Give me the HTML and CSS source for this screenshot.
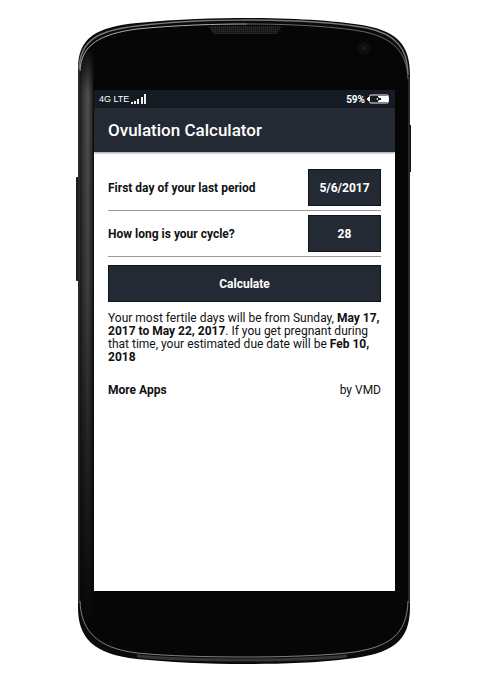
FILE: index.html
```html
<!DOCTYPE html>
<html lang="en">
<head>
  <meta charset="UTF-8">
  <meta name="viewport" content="width=device-width, initial-scale=1.0">
  <title>Ovulation Calculator</title>
  <link rel="stylesheet" href="styles.css">
</head>
<body>

  <div class="phone">
    <!-- Phone body -->
    <svg class="phone-case" viewBox="0 0 333 648" preserveAspectRatio="none" aria-hidden="true">
      <defs>
        <linearGradient id="side" x1="0" x2="1" y1="0" y2="0">
          <stop offset="0" stop-color="#161616"/>
          <stop offset="0.25" stop-color="#343434"/>
          <stop offset="0.6" stop-color="#505050"/>
          <stop offset="0.85" stop-color="#2c2c2c"/>
          <stop offset="1" stop-color="#080808"/>
        </linearGradient>
        <linearGradient id="shade" x1="0" x2="0" y1="0" y2="1">
          <stop offset="0" stop-color="#060606"/>
          <stop offset="0.08" stop-color="#060606" stop-opacity="0"/>
          <stop offset="0.4" stop-color="#060606" stop-opacity="0.2"/>
          <stop offset="0.7" stop-color="#060606" stop-opacity="0.6"/>
          <stop offset="1" stop-color="#060606"/>
        </linearGradient>
        <pattern id="mesh" width="2" height="2" patternUnits="userSpaceOnUse">
          <rect width="2" height="2" fill="#181818"/>
          <rect width="1" height="1" fill="#303030"/>
        </pattern>
        <clipPath id="glass">
          <path d="M3 54C4 24 24 17 60 12C100 8 140 7 170 7V640C130 640 90 639 60 636C20 631 4 614 3 584Z"/>
        </clipPath>
      </defs>
      <rect x="-1" y="160" width="3" height="104" rx="1" fill="#1a1a1a"/>
      <rect x="332" y="108" width="2" height="47" fill="#111"/>
      <path d="M1 52C1 20 20 10 60 6C100 2 140 1 170 1C220 1 262 4 290 9C320 15 333 28 333 58V590C333 625 315 637 270 642C240 646 200 647 170 647C130 647 90 645 60 642C15 637 1 620 1 590Z" fill="#0a0a0a"/>
      <path d="M2 52C3 23 22 13 60 9C100 4 140 3 170 3C220 3 262 6 290 11C318 17 331 31 331 58" fill="none" stroke="#777" stroke-width="1.5"/>
      <path d="M3 54C4 24 24 17 60 12C100 8 140 7 170 7C220 7 262 10 288 15C315 21 330 34 331 62V584C330 618 312 631 270 636C240 639 200 640 170 640C130 640 90 639 60 636C20 631 4 614 3 584Z" fill="#060606"/>
      <g clip-path="url(#glass)">
        <path d="M2 30H17V610H2Z" fill="url(#side)"/>
        <path d="M2 30H17V610H2Z" fill="url(#shade)"/>
      </g>
      <path d="M3 54C4 27 24 17 60 12C100 8 140 7 170 7" fill="none" stroke="#c0c0c0" stroke-width="0.9"/>
      <path d="M170 7C220 7 262 10 288 15C315 21 330 34 331 62" fill="none" stroke="#808080" stroke-width="0.8"/>
      <path d="M2 52V586M332 60V586" fill="none" stroke="#555" stroke-width="0.8"/>
      <path d="M3 584C4 614 20 631 60 636C90 639 130 640 170 640C200 640 240 639 270 636C312 631 330 618 331 584" fill="none" stroke="#8c8c8c" stroke-width="0.9"/>
      <path d="M60 639C90 642 130 643 170 643C210 643 240 642 270 639" fill="none" stroke="#363636" stroke-width="3"/>
      <path d="M131 9H205C203 10 202 17 199 17H138C134 17 134 10 131 9Z" fill="url(#mesh)"/>
      <circle cx="287" cy="31" r="6" fill="#0f0f0f"/>
      <circle cx="287" cy="31" r="2" fill="#1d1d20"/>
    </svg>

    <main class="screen">
      <div class="status-bar">
        <div class="status-group">
          <span class="network">4G LTE</span>
          <svg class="signal" viewBox="0 0 15 11" aria-hidden="true">
            <path d="M0 8h2v2H0zM3 7h2v3H3zM6 5h2v5H6zM10 3h2v7h-2zM13 0h2v10h-2z" fill="#eee"/>
          </svg>
        </div>
        <div class="status-group">
          <span class="battery-level">59%</span>
          <svg class="battery" viewBox="0 0 22 10" aria-hidden="true">
            <rect x="2.5" y="1" width="19" height="8" rx="1.5" fill="#161b22" stroke="#eee"/>
            <path d="M11 2h10v6H11z" fill="#fff"/>
            <path d="M2 3H1v1H0v2h1v1h1z" fill="#eee"/>
            <path d="M9 5l3-2v1h2v2h-2v1z" fill="#161b22"/>
            <path d="M9 5l2-1v2z" fill="#fff"/>
          </svg>
        </div>
      </div>

      <header class="header">
        <h1>Ovulation Calculator</h1>
      </header>

      <div class="content">
        <form class="calculator" onsubmit="return false">
          <div class="field">
            <label for="last-period">First day of your last period</label>
            <input type="text" id="last-period" value="5/6/2017">
          </div>
          <div class="field">
            <label for="cycle">How long is your cycle?</label>
            <input type="text" id="cycle" value="28">
          </div>
          <button type="submit" class="calculate-btn">Calculate</button>
        </form>

        <p class="result">Your most fertile days will be from Sunday, <b>May 17, 2017 to May 22, 2017</b>. If you get pregnant during that time, your estimated due date will be <b>Feb 10, 2018</b></p>

        <footer class="footer">
          <a href="#">More Apps</a>
          <span>by VMD</span>
        </footer>
      </div>
    </main>
  </div>

</body>
</html>
```
FILE: styles.css
```css
* {
  box-sizing: border-box;
}
body {
  font-family: Roboto, Arial, sans-serif;
  font-size: 12px;
  margin: 0;
  background-color: white;
  color: #111;
}
.phone {
  position: relative;
  display: flex;
  flex-direction: column;
  min-height: calc(100vh - 27px);
  margin: 17px 70px 10px 77px;
  padding: 73px 15px 74px 17px;
}
.phone-case {
  position: absolute;
  inset: 0;
  width: 100%;
  height: 100%;
  overflow: visible;
}
.screen {
  position: relative;
  flex: 1;
  background-color: white;
}
.status-bar {
  display: flex;
  justify-content: space-between;
  align-items: center;
  height: 18px;
  padding: 0 6px 0 5px;
  background-color: #161b23;
  color: white;
}
.status-group {
  display: flex;
  align-items: center;
  gap: 2px;
}
.network {
  font-family: "Liberation Sans", Arial, sans-serif;
  font-size: 9px;
}
.battery-level {
  font-size: 10px;
  font-weight: bold;
}
.signal {
  width: 15px;
  height: 11px;
}
.battery {
  width: 22px;
  height: 10px;
}
.header {
  display: flex;
  align-items: center;
  height: 44px;
  padding: 0 14px;
  background-color: #232a34;
  color: white;
  box-shadow: 0 1px 2px rgba(0, 0, 0, 0.4);
}
.header h1 {
  margin: 0;
  font-size: 17px;
  font-weight: 500;
}
.content {
  padding: 17px 14px;
}
.field {
  display: flex;
  justify-content: space-between;
  align-items: center;
  padding-bottom: 4px;
  margin-bottom: 4px;
  border-bottom: 1px solid #999;
}
.field label {
  font-weight: bold;
}
.field input {
  width: 73px;
  height: 37px;
  padding: 0;
  border: 1px solid #10151c;
  border-radius: 0;
  background-color: #232a34;
  color: white;
  font: inherit;
  font-weight: bold;
  text-align: center;
}
.calculate-btn {
  width: 100%;
  height: 37px;
  margin-top: 4px;
  border: 1px solid #10151c;
  background-color: #232a34;
  color: white;
  font: inherit;
  font-weight: bold;
  cursor: pointer;
}
.result {
  margin: 10px 0 20px;
  line-height: 13px;
}
.footer {
  display: flex;
  justify-content: space-between;
  line-height: 13px;
}
.footer a {
  color: inherit;
  font-weight: bold;
  text-decoration: none;
}
```
